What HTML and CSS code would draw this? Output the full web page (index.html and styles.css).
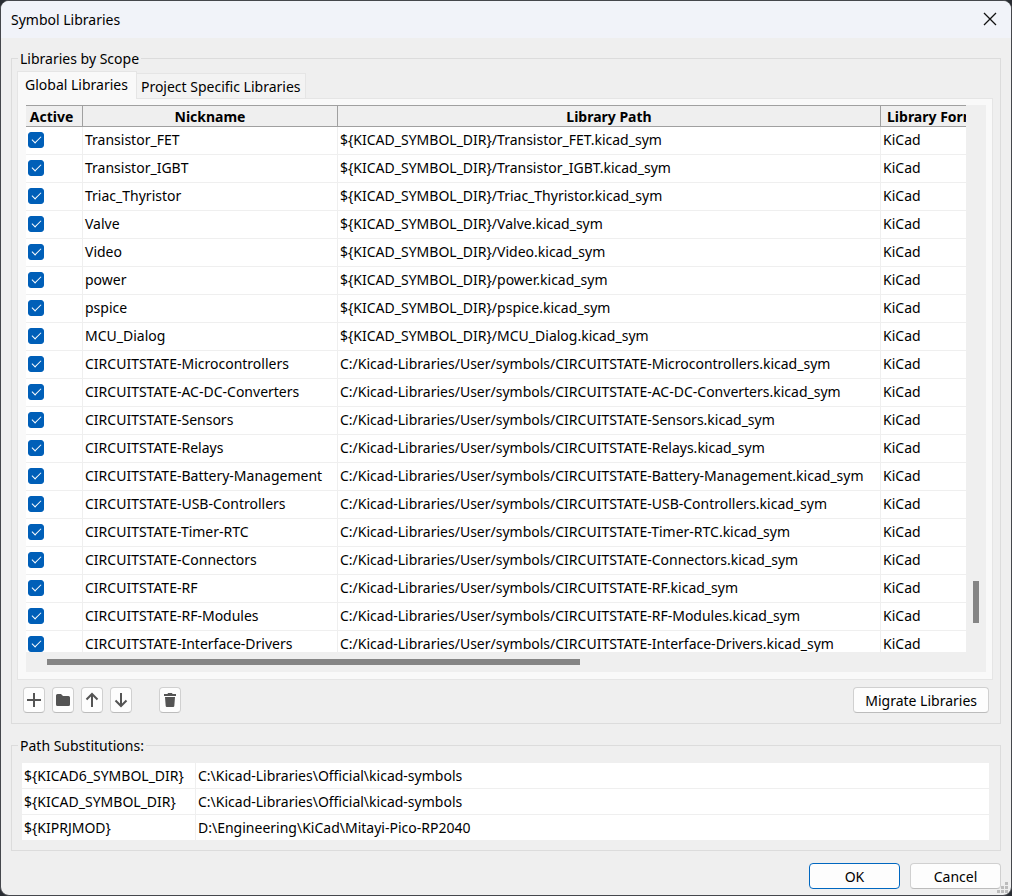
FILE: index.html
```html
<!DOCTYPE html>
<html lang="en">
<head>
    <meta charset="UTF-8">
    <meta name="viewport" content="width=device-width, initial-scale=1.0">
    <title>Symbol Libraries</title>
    <link rel="stylesheet" href="styles.css">
</head>
<body>
    <div class="dialog">
        <header class="titlebar">
            <h1>Symbol Libraries</h1>
            <button class="close" aria-label="Close">
                <svg width="14" height="14" viewBox="0 0 14 14"><path d="M1 1L13 13M13 1L1 13"/></svg>
            </button>
        </header>

        <main class="content">
            <fieldset class="group scope">
                <legend>Libraries by Scope</legend>
                <div class="tabs" role="tablist">
                    <button class="tab active" role="tab" aria-selected="true">Global Libraries</button>
                    <button class="tab" role="tab" aria-selected="false">Project Specific Libraries</button>
                </div>
                <div class="pane" role="tabpanel">
                    <div class="grid">
                        <div class="grid-view">
                            <table class="libs">
                                <colgroup>
                                    <col class="col-active">
                                    <col class="col-nick">
                                    <col class="col-path">
                                    <col class="col-format">
                                </colgroup>
                                <thead>
                                    <tr><th>Active</th><th>Nickname</th><th>Library Path</th><th>Library Format</th></tr>
                                </thead>
                                <tbody>
                                    <tr><td><input type="checkbox" aria-label="Transistor_FET" checked></td><td>Transistor_FET</td><td>${KICAD_SYMBOL_DIR}/Transistor_FET.kicad_sym</td><td>KiCad</td></tr>
                                    <tr><td><input type="checkbox" aria-label="Transistor_IGBT" checked></td><td>Transistor_IGBT</td><td>${KICAD_SYMBOL_DIR}/Transistor_IGBT.kicad_sym</td><td>KiCad</td></tr>
                                    <tr><td><input type="checkbox" aria-label="Triac_Thyristor" checked></td><td>Triac_Thyristor</td><td>${KICAD_SYMBOL_DIR}/Triac_Thyristor.kicad_sym</td><td>KiCad</td></tr>
                                    <tr><td><input type="checkbox" aria-label="Valve" checked></td><td>Valve</td><td>${KICAD_SYMBOL_DIR}/Valve.kicad_sym</td><td>KiCad</td></tr>
                                    <tr><td><input type="checkbox" aria-label="Video" checked></td><td>Video</td><td>${KICAD_SYMBOL_DIR}/Video.kicad_sym</td><td>KiCad</td></tr>
                                    <tr><td><input type="checkbox" aria-label="power" checked></td><td>power</td><td>${KICAD_SYMBOL_DIR}/power.kicad_sym</td><td>KiCad</td></tr>
                                    <tr><td><input type="checkbox" aria-label="pspice" checked></td><td>pspice</td><td>${KICAD_SYMBOL_DIR}/pspice.kicad_sym</td><td>KiCad</td></tr>
                                    <tr><td><input type="checkbox" aria-label="MCU_Dialog" checked></td><td>MCU_Dialog</td><td>${KICAD_SYMBOL_DIR}/MCU_Dialog.kicad_sym</td><td>KiCad</td></tr>
                                    <tr><td><input type="checkbox" aria-label="CIRCUITSTATE-Microcontrollers" checked></td><td>CIRCUITSTATE-Microcontrollers</td><td>C:/Kicad-Libraries/User/symbols/CIRCUITSTATE-Microcontrollers.kicad_sym</td><td>KiCad</td></tr>
                                    <tr><td><input type="checkbox" aria-label="CIRCUITSTATE-AC-DC-Converters" checked></td><td>CIRCUITSTATE-AC-DC-Converters</td><td>C:/Kicad-Libraries/User/symbols/CIRCUITSTATE-AC-DC-Converters.kicad_sym</td><td>KiCad</td></tr>
                                    <tr><td><input type="checkbox" aria-label="CIRCUITSTATE-Sensors" checked></td><td>CIRCUITSTATE-Sensors</td><td>C:/Kicad-Libraries/User/symbols/CIRCUITSTATE-Sensors.kicad_sym</td><td>KiCad</td></tr>
                                    <tr><td><input type="checkbox" aria-label="CIRCUITSTATE-Relays" checked></td><td>CIRCUITSTATE-Relays</td><td>C:/Kicad-Libraries/User/symbols/CIRCUITSTATE-Relays.kicad_sym</td><td>KiCad</td></tr>
                                    <tr><td><input type="checkbox" aria-label="CIRCUITSTATE-Battery-Management" checked></td><td>CIRCUITSTATE-Battery-Management</td><td>C:/Kicad-Libraries/User/symbols/CIRCUITSTATE-Battery-Management.kicad_sym</td><td>KiCad</td></tr>
                                    <tr><td><input type="checkbox" aria-label="CIRCUITSTATE-USB-Controllers" checked></td><td>CIRCUITSTATE-USB-Controllers</td><td>C:/Kicad-Libraries/User/symbols/CIRCUITSTATE-USB-Controllers.kicad_sym</td><td>KiCad</td></tr>
                                    <tr><td><input type="checkbox" aria-label="CIRCUITSTATE-Timer-RTC" checked></td><td>CIRCUITSTATE-Timer-RTC</td><td>C:/Kicad-Libraries/User/symbols/CIRCUITSTATE-Timer-RTC.kicad_sym</td><td>KiCad</td></tr>
                                    <tr><td><input type="checkbox" aria-label="CIRCUITSTATE-Connectors" checked></td><td>CIRCUITSTATE-Connectors</td><td>C:/Kicad-Libraries/User/symbols/CIRCUITSTATE-Connectors.kicad_sym</td><td>KiCad</td></tr>
                                    <tr><td><input type="checkbox" aria-label="CIRCUITSTATE-RF" checked></td><td>CIRCUITSTATE-RF</td><td>C:/Kicad-Libraries/User/symbols/CIRCUITSTATE-RF.kicad_sym</td><td>KiCad</td></tr>
                                    <tr><td><input type="checkbox" aria-label="CIRCUITSTATE-RF-Modules" checked></td><td>CIRCUITSTATE-RF-Modules</td><td>C:/Kicad-Libraries/User/symbols/CIRCUITSTATE-RF-Modules.kicad_sym</td><td>KiCad</td></tr>
                                    <tr><td><input type="checkbox" aria-label="CIRCUITSTATE-Interface-Drivers" checked></td><td>CIRCUITSTATE-Interface-Drivers</td><td>C:/Kicad-Libraries/User/symbols/CIRCUITSTATE-Interface-Drivers.kicad_sym</td><td>KiCad</td></tr>
                                </tbody>
                            </table>
                        </div>
                        <div class="vscroll"><div class="vthumb"></div></div>
                        <div class="hscroll"><div class="hthumb"></div></div>
                    </div>
                </div>
                <div class="toolbar">
                    <button class="btn icon" aria-label="Add library">
                        <svg width="16" height="16" viewBox="0 0 16 16"><path class="line" d="M8 1V15M1 8H15"/></svg>
                    </button>
                    <button class="btn icon" aria-label="Browse libraries">
                        <svg width="16" height="16" viewBox="0 0 16 16"><path d="M1 3.5Q1 2 2.5 2H6L8 4H13.5Q15 4 15 5.5V12.5Q15 14 13.5 14H2.5Q1 14 1 12.5Z"/></svg>
                    </button>
                    <button class="btn icon" aria-label="Move up">
                        <svg width="16" height="16" viewBox="0 0 16 16"><path class="line" d="M8 15V2M2.5 7.5L8 2L13.5 7.5"/></svg>
                    </button>
                    <button class="btn icon" aria-label="Move down">
                        <svg width="16" height="16" viewBox="0 0 16 16"><path class="line" d="M8 1V14M2.5 8.5L8 14L13.5 8.5"/></svg>
                    </button>
                    <button class="btn icon trash" aria-label="Remove library">
                        <svg width="16" height="16" viewBox="0 0 16 16"><path d="M2 2H5.5L6 1H10L10.5 2H14V4H2ZM3 5H13L12.3 14Q12.2 15 11.2 15H4.8Q3.8 15 3.7 14Z"/></svg>
                    </button>
                    <button class="btn migrate">Migrate Libraries</button>
                </div>
            </fieldset>

            <fieldset class="group paths">
                <legend>Path Substitutions:</legend>
                <table class="subs">
                    <tr><td>${KICAD6_SYMBOL_DIR}</td><td>C:\Kicad-Libraries\Official\kicad-symbols</td></tr>
                    <tr><td>${KICAD_SYMBOL_DIR}</td><td>C:\Kicad-Libraries\Official\kicad-symbols</td></tr>
                    <tr><td>${KIPRJMOD}</td><td>D:\Engineering\KiCad\Mitayi-Pico-RP2040</td></tr>
                </table>
            </fieldset>
        </main>

        <footer class="actions">
            <button class="btn default">OK</button>
            <button class="btn">Cancel</button>
        </footer>
        <svg class="grip" width="12" height="12" viewBox="0 0 12 12"><path d="M8 0h3v3h-3zM4 4h3v3h-3zM8 4h3v3h-3zM0 8h3v3h-3zM4 8h3v3h-3zM8 8h3v3h-3z"/></svg>
    </div>
</body>
</html>
```
FILE: styles.css
```css
/* Global Styles */
* {
    box-sizing: border-box;
}

body {
    margin: 0;
    background-color: #2a2d33;
    color: #000;
    font-family: "Noto Sans", "Segoe UI", sans-serif;
    font-size: 14px;
    line-height: 19px;
}

button {
    font: inherit;
    color: inherit;
    padding: 0;
}

.dialog {
    position: relative;
    display: flex;
    flex-direction: column;
    height: 100vh;
    border: 1px solid #45474c;
    border-radius: 9px;
    background-color: #efefef;
    overflow: hidden;
}

/* Title bar */
.titlebar {
    display: flex;
    justify-content: space-between;
    align-items: center;
    height: 37px;
    padding: 0 14px 1px 10px;
    background-color: #f1f3f9;
}

.titlebar h1 {
    margin: 0;
    font-size: 14px;
    font-weight: normal;
}

.close {
    display: flex;
    border: none;
    background: none;
}

.close svg {
    fill: none;
    stroke: #111;
    stroke-width: 1.3;
}

.content {
    display: flex;
    flex-direction: column;
    flex: 1;
    gap: 12px;
    min-height: 0;
    padding: 11px 10px 0;
}

/* Group boxes */
.group {
    min-width: 0;
    margin: 0;
    border: 1px solid #dcdcdc;
}

.group legend {
    padding: 0 2px;
}

.scope {
    display: flex;
    flex-direction: column;
    flex: 1;
    min-height: 0;
    padding: 3px 7px 10px 5px;
}

.paths {
    padding: 8px 11px 10px 10px;
}

.scope legend {
    margin-left: 1px;
}

.paths legend {
    margin-left: -4px;
}

/* Tabs */
.tabs {
    display: flex;
    align-items: flex-end;
}

.tab {
    height: 25px;
    padding: 0 4px;
    border: 1px solid #e5e5e5;
    border-left: none;
    border-bottom: none;
    background-color: #f3f3f3;
}

.tab.active {
    height: 28px;
    margin-bottom: -1px;
    padding: 0 8px 3px 7px;
    border-left: 1px solid #e5e5e5;
    background-color: #f9f9f9;
    z-index: 1;
}

.pane {
    display: flex;
    flex: 1;
    min-height: 0;
    padding: 6px 6px 7px 8px;
    border: 1px solid #e5e5e5;
    background-color: #f9f9f9;
}

/* Library grid */
.grid {
    display: grid;
    grid-template-columns: 1fr 20px;
    grid-template-rows: 1fr 20px;
    flex: 1;
    min-width: 0;
    min-height: 0;
    background-color: #efefef;
}

.grid-view {
    overflow: hidden;
    min-height: 0;
    background-color: #fff;
}

table {
    border-collapse: separate;
    border-spacing: 0;
    table-layout: fixed;
}

.libs {
    width: 972px;
}

.col-active {
    width: 57px;
}

.col-nick {
    width: 255px;
}

.col-path {
    width: 543px;
}

.libs th {
    height: 22px;
    padding: 0;
    border: 1px solid #a0a0a0;
    border-left: none;
    background-color: #efefef;
    font-size: 14px;
    white-space: nowrap;
}

.libs th:first-child {
    padding-right: 5px;
}

.libs td {
    height: 28px;
    padding: 0 2px 2px;
    border-right: 1px solid #efefef;
    border-bottom: 1px solid #efefef;
    white-space: nowrap;
}

.libs input {
    display: flex;
    justify-content: center;
    align-items: center;
    appearance: none;
    width: 16px;
    height: 16px;
    margin: 0;
    border-radius: 3px;
    border: 1px solid #868686;
}

.libs input:checked {
    border-color: #005fb8;
    background-color: #005fb8;
}

.libs input:checked::before {
    content: "";
    width: 8px;
    height: 4px;
    margin-bottom: 2px;
    border-left: 1px solid #fff;
    border-bottom: 1px solid #fff;
    transform: rotate(-45deg);
}

/* Scrollbars */
.vscroll {
    display: flex;
    flex-direction: column;
    justify-content: flex-end;
    align-items: center;
    padding-bottom: 29px;
}

.vthumb {
    width: 6px;
    height: 42px;
    background-color: #858585;
}

.hscroll {
    display: flex;
    align-items: center;
    padding-left: 21px;
}

.hthumb {
    width: 58%;
    height: 6px;
    background-color: #858585;
}

/* Buttons */
.btn {
    height: 26px;
    border: 1px solid #d0d0d0;
    border-bottom-color: #bcbcbc;
    border-radius: 4px;
    background-color: #fdfdfd;
}

.toolbar {
    display: flex;
    gap: 7px;
    margin-top: 7px;
    padding: 0 4px 0 6px;
}

.icon {
    display: flex;
    justify-content: center;
    align-items: center;
    width: 22px;
}

.icon svg {
    flex: none;
    fill: #545454;
}

.icon .line {
    fill: none;
    stroke: #545454;
    stroke-width: 2;
}

.trash {
    margin-left: 20px;
}

.migrate {
    margin-left: auto;
    padding: 0 11px;
}

/* Path substitutions */
.subs {
    width: 100%;
    background-color: #fff;
}

.subs td {
    height: 26px;
    padding: 0 2px;
    border-bottom: 1px solid #efefef;
}

.subs td:first-child {
    width: 174px;
    border-right: 1px solid #efefef;
}

.subs tr:last-child td {
    height: 25px;
    border-bottom: none;
}

/* Footer */
.actions {
    display: flex;
    justify-content: flex-end;
    gap: 10px;
    padding: 12px 10px 6px;
}

.actions .btn {
    width: 91px;
}

.actions .default {
    border-color: #0067c0;
}

.grip {
    position: absolute;
    right: 2px;
    bottom: 1px;
    fill: #bcbcbc;
}
```
